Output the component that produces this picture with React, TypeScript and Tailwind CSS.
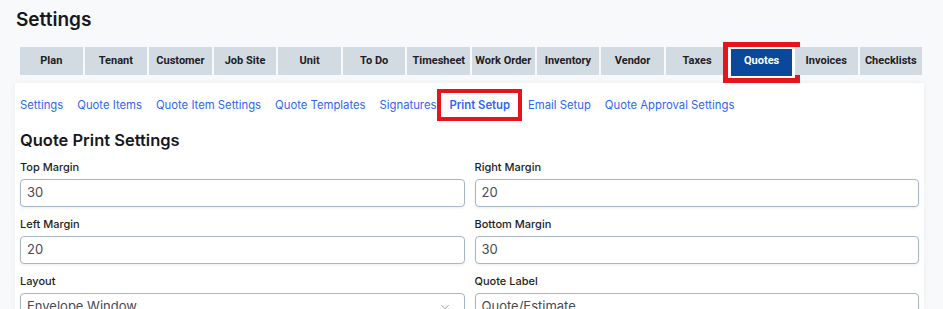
import { ChevronDown } from 'lucide-react';

const TABS = [
  'Plan',
  'Tenant',
  'Customer',
  'Job Site',
  'Unit',
  'To Do',
  'Timesheet',
  'Work Order',
  'Inventory',
  'Vendor',
  'Taxes',
  'Quotes',
  'Invoices',
  'Checklists',
];

const SUBLINKS = [
  'Settings',
  'Quote Items',
  'Quote Item Settings',
  'Quote Templates',
  'Signatures',
  'Print Setup',
  'Email Setup',
  'Quote Approval Settings',
];

const body = { fontFamily: 'Inter, "Noto Sans", sans-serif' };
const tabFont = { fontFamily: 'Roboto, "Liberation Sans", sans-serif' };

function Field({ label, value, select }: { label: string; value: string; select?: boolean }) {
  return (
    <div className="flex flex-col">
      <label className="mb-[3px] h-[17px] text-[11px] font-medium leading-[17px] text-[#1b1e24]">{label}</label>
      <div className="flex h-[28px] items-center rounded-[4px] border border-[#a9b6c3] bg-white px-[6px] shadow-[0_1px_3px_rgba(0,0,0,0.08)]">
        <span className="flex-1 text-[13px] text-[#464b53]">{value}</span>
        {select ? <ChevronDown size={14} strokeWidth={1.5} className="mr-[6px] text-[#8d96a0]" /> : null}
      </div>
    </div>
  );
}

export default function App() {
  return (
    <div className="h-[309px] w-[943px] overflow-hidden bg-[#f8f9fb]" style={body}>
      <h1 className="pl-[16px] pt-[6px] text-[19px] font-semibold leading-[28px] text-[#16181c]">Settings</h1>

      <div className="mt-[13px] ml-[20px] mr-[21px] flex gap-[2px]" style={tabFont}>
        {TABS.map((t) => {
          const active = t === 'Quotes';
          return (
            <div key={t} className="relative flex-1">
              <div
                className={
                  active
                    ? 'mx-[1px] flex h-[29px] items-center justify-center bg-[#09489a] text-[11px] font-bold text-white'
                    : 'flex h-[28px] items-center justify-center bg-[#d3dbe2] text-[11px] font-bold text-[#1d2026]'
                }
              >
                {t}
              </div>
              {active ? (
                <div className="absolute -left-[7px] -right-[7px] -top-[5px] -bottom-[7px] border-[5px] border-[#e8141c] bg-transparent">
                  <div className="h-full w-full border-[2px] border-white" />
                </div>
              ) : null}
            </div>
          );
        })}
      </div>

      <div className="ml-[15px] mr-[19px] mt-[7px] bg-white px-[5px] pb-[20px] shadow-[0_0_6px_rgba(0,0,0,0.06)]">
        <div className="flex h-[44px] items-center gap-[14px] text-[11.3px] text-[#2f66f0]">
          {SUBLINKS.map((l) =>
            l === 'Print Setup' ? (
              <span
                key={l}
                className="-ml-[13px] -mr-[8px] flex h-[32px] items-center border-[4px] border-[#e8141c] px-[8px] font-semibold"
              >
                {l}
              </span>
            ) : (
              <span key={l}>{l}</span>
            ),
          )}
        </div>

        <h2 className="mt-[2px] text-[16.5px] font-semibold leading-[22px] text-[#16181c]">Quote Print Settings</h2>

        <div className="mt-[8px] grid grid-cols-2 gap-x-[10px] gap-y-[9px]">
          <Field label="Top Margin" value="30" />
          <Field label="Right Margin" value="20" />
          <Field label="Left Margin" value="20" />
          <Field label="Bottom Margin" value="30" />
          <Field label="Layout" value="Envelope Window" select />
          <Field label="Quote Label" value="Quote/Estimate" />
        </div>
      </div>
    </div>
  );
}
